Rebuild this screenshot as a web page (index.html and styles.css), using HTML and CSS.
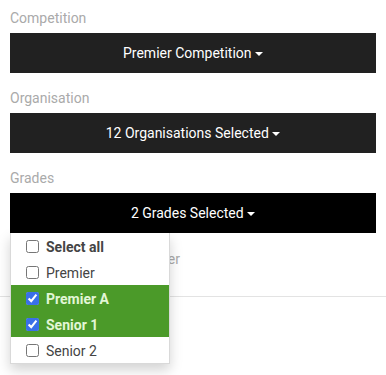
FILE: index.html
```html
<!DOCTYPE html>
<html>
<head>
<meta charset="utf-8">
<link rel="stylesheet" href="styles.css">
</head>
<body>
<div class="filters">
  <div class="group">
    <div class="label">Competition</div>
    <button class="select">Premier Competition <span class="caret"></span></button>
  </div>
  <div class="group">
    <div class="label">Organisation</div>
    <button class="select">12 Organisations Selected <span class="caret"></span></button>
  </div>
  <div class="group grades">
    <div class="label">Grades</div>
    <button class="select open">2 Grades Selected <span class="caret"></span></button>
    <ul class="menu">
      <li class="item all"><input type="checkbox"><span>Select all</span></li>
      <li class="item"><input type="checkbox"><span>Premier</span></li>
      <li class="item active"><input type="checkbox" checked><span>Premier A</span></li>
      <li class="item active"><input type="checkbox" checked><span>Senior 1</span></li>
      <li class="item"><input type="checkbox"><span>Senior 2</span></li>
    </ul>
  </div>
  <div class="note">Apply filter</div>
</div>
<hr class="sep">
</body>
</html>
```
FILE: styles.css
```css
* { box-sizing: border-box; }
html, body {
  min-height: 100%;
}
body {
  margin: 0;
  min-height: 375px;
  font-family: Roboto, "Liberation Sans", sans-serif;
  font-size: 14px;
  color: #333;
  background: #fff;
}
.filters {
  padding: 8px 10px 0;
}
.group {
  margin-bottom: 15px;
}
.grades {
  position: relative;
  margin-bottom: 0;
}
.label {
  line-height: 20px;
  color: #aaa;
  margin-bottom: 5px;
}
.select {
  display: block;
  width: 100%;
  height: 40px;
  border: 0;
  border-radius: 0;
  background: #212121;
  color: #fff;
  font-family: inherit;
  font-size: 14px;
  text-align: center;
  padding: 0 0 1px;
}
.select.open {
  background: #000;
}
.caret {
  display: inline-block;
  width: 0;
  height: 0;
  margin-left: 0;
  vertical-align: middle;
  border-top: 4px solid #fff;
  border-left: 4px solid transparent;
  border-right: 4px solid transparent;
}
.menu {
  position: absolute;
  left: 0;
  top: 65px;
  width: 160px;
  margin: 0;
  padding: 0;
  list-style: none;
  background: #fff;
  border: 1px solid rgba(0,0,0,.15);
  border-top: 0;
  box-shadow: 0 6px 12px rgba(0,0,0,.175);
  z-index: 2;
}
.item {
  display: flex;
  align-items: center;
  height: 26px;
  padding-left: 15px;
  padding-top: 1px;
  color: #444;
}
.item input {
  width: 13px;
  height: 13px;
  margin: 0 7px 0 0;
  accent-color: #3a70e8;
}
.item.all {
  font-weight: bold;
}
.item.active {
  background: #4b9a29;
  color: #e2f6d6;
  font-weight: bold;
}
.note {
  width: 170px;
  text-align: right;
  margin-top: 16px;
  line-height: 20px;
  color: #aaa;
}
.sep {
  margin: 27px 0 0;
  border: 0;
  border-top: 1px solid #e3e3e3;
}
```
